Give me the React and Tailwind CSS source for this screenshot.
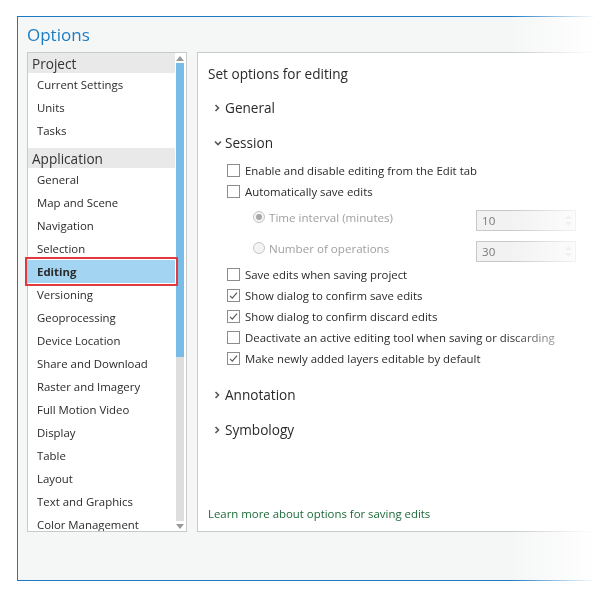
import React from "react";

const font = { fontFamily: '"Open Sans", "Noto Sans", sans-serif' };

const projectItems = ["Current Settings", "Units", "Tasks"];
const appItems = [
  "General",
  "Map and Scene",
  "Navigation",
  "Selection",
  "Editing",
  "Versioning",
  "Geoprocessing",
  "Device Location",
  "Share and Download",
  "Raster and Imagery",
  "Full Motion Video",
  "Display",
  "Table",
  "Layout",
  "Text and Graphics",
  "Color Management",
];

function Chevron({ open }) {
  return (
    <span className="w-[11px] flex items-center justify-start">
      {open ? (
        <svg width="8" height="6" viewBox="0 0 8 6">
          <path d="M1 1.5 L4 4.5 L7 1.5" fill="none" stroke="#555" strokeWidth="1.6" />
        </svg>
      ) : (
        <svg width="6" height="8" viewBox="0 0 6 8">
          <path d="M1.5 1 L4.5 4 L1.5 7" fill="none" stroke="#555" strokeWidth="1.6" />
        </svg>
      )}
    </span>
  );
}

function Checkbox({ checked, label }) {
  return (
    <div className="h-[21px] flex items-center pl-[29px]">
      <span className="w-[13px] h-[13px] border border-[#8c8c8c] bg-white flex items-center justify-center">
        {checked && (
          <svg width="11" height="11" viewBox="0 0 11 11">
            <path d="M2 5.8 L4.3 8.2 L9 2.6" fill="none" stroke="#5a5a5a" strokeWidth="1.2" />
          </svg>
        )}
      </span>
      <span className="ml-[5px] pt-[1px] text-[11.4px] text-[#2a2a2a]">{label}</span>
    </div>
  );
}

function RadioRow({ selected, label, value }) {
  return (
    <div className="h-[31px] flex items-center pl-[55px]">
      <div className="w-[223px] flex items-center">
        <span className="w-[12px] h-[12px] rounded-full border border-[#c4c4c4] bg-[#f4f4f4] flex items-center justify-center">
          {selected && <span className="w-[6px] h-[6px] rounded-full bg-[#a8a8a8]" />}
        </span>
        <span className="ml-[4px] pt-[1px] text-[11.6px] text-[#a0a0a0]">{label}</span>
      </div>
      <div className="mt-[5px] w-[100px] h-[21px] border border-[#c8c8c8] bg-[#f2f2f2] flex items-center justify-between pl-[5px] pr-[3px]">
        <span className="pt-[1px] text-[11.6px] text-[#7a7a7a]">{value}</span>
        <span className="flex flex-col gap-[3px]">
          <svg width="7" height="4" viewBox="0 0 7 4">
            <path d="M0 4 L3.5 0 L7 4 Z" fill="#d2d2d2" />
          </svg>
          <svg width="7" height="4" viewBox="0 0 7 4">
            <path d="M0 0 L3.5 4 L7 0 Z" fill="#d2d2d2" />
          </svg>
        </span>
      </div>
    </div>
  );
}

function Section({ open, label }) {
  return (
    <div className="h-[35px] flex items-center pl-[16px]">
      <Chevron open={open} />
      <span className="pt-[1px] text-[13.6px] text-[#2a2a2a]">{label}</span>
    </div>
  );
}

function ListHeader({ children }) {
  return (
    <div className="h-[20px] flex items-center bg-[#e9e9e9] pl-[4px] pt-[2px] text-[13.6px] text-[#333]">
      {children}
    </div>
  );
}

function ListItem({ label }) {
  const active = label === "Editing";
  return (
    <div
      className={`h-[23px] flex items-center pl-[9px] pt-[1px] text-[11.4px] text-[#2a2a2a] ${
        active
          ? "relative z-10 bg-[#a3d4f2] font-bold outline-2 outline-[#e0393e] outline-offset-1"
          : ""
      }`}
    >
      {label}
    </div>
  );
}

export default function App() {
  return (
    <div className="w-[596px] h-[599px] bg-white pt-[16px] pl-[17px] overflow-hidden" style={font}>
      <div className="h-[565px] border-l border-t border-b border-[#1a7ac6] bg-[#f5f6f6] flex flex-col [mask-image:linear-gradient(to_right,#000_85%,transparent_100%)]">
        <div className="h-[35px] pl-[9px] flex items-center text-[17px] text-[#1b7cc4]">Options</div>
        <div className="flex pl-[9px] gap-[10px]">
          <div className="w-[160px] h-[480px] border border-[#c9c9c9] bg-white flex">
            <div className="w-[147px] h-full overflow-y-clip relative z-10">
              <ListHeader>Project</ListHeader>
              {projectItems.map((i) => (
                <ListItem key={i} label={i} />
              ))}
              <div className="h-[6px]" />
              <ListHeader>Application</ListHeader>
              {appItems.map((i) => (
                <ListItem key={i} label={i} />
              ))}
            </div>
            <div className="w-[11px] h-full pl-[1px] pr-[2px] flex flex-col">
              <div className="h-[10px] flex items-center justify-center">
                <svg width="8" height="5" viewBox="0 0 8 5">
                  <path d="M0 5 L4 0 L8 5 Z" fill="#9a9a9a" />
                </svg>
              </div>
              <div className="h-[294px] bg-[#78bde8]" />
              <div className="flex-1 bg-[#dedede]" />
              <div className="h-[10px] flex items-center justify-center">
                <svg width="8" height="5" viewBox="0 0 8 5">
                  <path d="M0 0 L4 5 L8 0 Z" fill="#9a9a9a" />
                </svg>
              </div>
            </div>
          </div>
          <div className="flex-1 h-[480px] border border-[#c9c9c9] bg-white flex flex-col">
            <div className="h-[37px] pt-[11px] pl-[10px] text-[13.6px] leading-[20px] text-[#2a2a2a]">
              Set options for editing
            </div>
            <Section label="General" />
            <Section open label="Session" />
            <Checkbox label="Enable and disable editing from the Edit tab" />
            <Checkbox label="Automatically save edits" />
            <RadioRow selected label="Time interval (minutes)" value="10" />
            <RadioRow label="Number of operations" value="30" />
            <Checkbox label="Save edits when saving project" />
            <Checkbox checked label="Show dialog to confirm save edits" />
            <Checkbox checked label="Show dialog to confirm discard edits" />
            <Checkbox label="Deactivate an active editing tool when saving or discarding" />
            <Checkbox checked label="Make newly added layers editable by default" />
            <div className="h-[8px]" />
            <Section label="Annotation" />
            <Section label="Symbology" />
            <div className="mt-auto pb-[7px] pl-[10px] h-[27px] text-[11.4px] leading-[20px] text-[#1d6a3a]">
              Learn more about options for saving edits
            </div>
          </div>
        </div>
      </div>
    </div>
  );
}
